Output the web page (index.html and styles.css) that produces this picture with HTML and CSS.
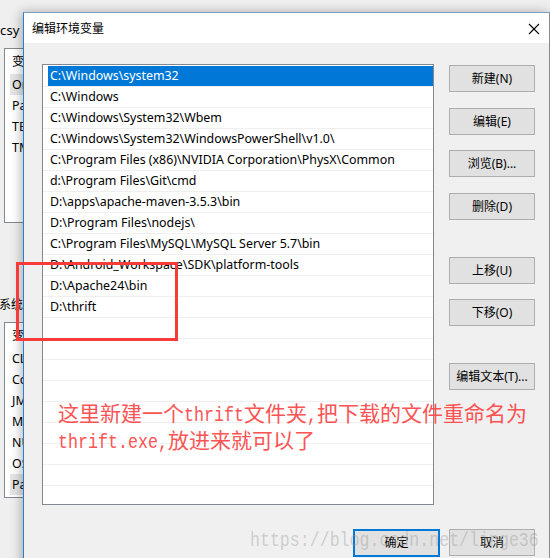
FILE: index.html
```html
<!DOCTYPE html>
<html lang="zh-CN">
<head>
<meta charset="utf-8">
<title>编辑环境变量</title>
<link rel="stylesheet" href="styles.css">
</head>
<body>
<div class="desk">
  <div class="bgwin">
    <div class="bg-head"><span class="bg-user">csy</span><span class="bg-mark"></span></div>
    <div class="bg-list bg-list1">
      <div class="bg-row bg-hdr">变量</div>
      <div class="bg-row bg-sel">OneDrive</div>
      <div class="bg-row">Path</div>
      <div class="bg-row">TEMP</div>
      <div class="bg-row">TMP</div>
    </div>
    <div class="bg-label">系统变量(S)</div>
    <div class="bg-list bg-list2">
      <div class="bg-row bg-hdr">变量</div>
      <div class="bg-row">CLASSPATH</div>
      <div class="bg-row">ComSpec</div>
      <div class="bg-row">JMETER_HOME</div>
      <div class="bg-row">MAVEN_HOME</div>
      <div class="bg-row">NUMBER_OF_PROCESSORS</div>
      <div class="bg-row">OS</div>
      <div class="bg-row bg-sel">Path</div>
    </div>
  </div>

  <div class="dialog">
    <div class="titlebar">
      <span class="title">编辑环境变量</span>
      <svg class="close" width="12" height="12" viewBox="0 0 12 12"><path d="M1 1 L11 11 M11 1 L1 11" stroke="#000" stroke-width="1.1" fill="none"/></svg>
    </div>
    <div class="body">
      <div class="main">
        <div class="list">
          <div class="row sel"><span class="cell">C:\Windows\system32</span></div>
          <div class="row"><span class="cell">C:\Windows</span></div>
          <div class="row"><span class="cell">C:\Windows\System32\Wbem</span></div>
          <div class="row"><span class="cell">C:\Windows\System32\WindowsPowerShell\v1.0\</span></div>
          <div class="row"><span class="cell">C:\Program Files (x86)\NVIDIA Corporation\PhysX\Common</span></div>
          <div class="row"><span class="cell">d:\Program Files\Git\cmd</span></div>
          <div class="row"><span class="cell">D:\apps\apache-maven-3.5.3\bin</span></div>
          <div class="row"><span class="cell">D:\Program Files\nodejs\</span></div>
          <div class="row"><span class="cell">C:\Program Files\MySQL\MySQL Server 5.7\bin</span></div>
          <div class="row"><span class="cell">D:\Android_Workspace\SDK\platform-tools</span></div>
          <div class="row"><span class="cell">D:\Apache24\bin</span></div>
          <div class="row"><span class="cell">D:\thrift</span></div>
          <div class="row"><span class="cell"></span></div>
          <div class="row"><span class="cell"></span></div>
          <div class="row"><span class="cell"></span></div>
          <div class="row"><span class="cell"></span></div>
          <div class="row"><span class="cell"></span></div>
          <div class="row"><span class="cell"></span></div>
          <div class="row"><span class="cell"></span></div>
          <div class="row"><span class="cell"></span></div>
          <div class="row last"><span class="cell"></span></div>
        </div>
        <div class="side">
          <button class="btn">新建(N)</button>
          <button class="btn g16">编辑(E)</button>
          <button class="btn g15">浏览(B)...</button>
          <button class="btn g16">删除(D)</button>
          <button class="btn g37">上移(U)</button>
          <button class="btn g15">下移(O)</button>
          <button class="btn g37">编辑文本(T)...</button>
        </div>
      </div>
      <div class="footer">
        <button class="btn ok">确定</button>
        <button class="btn cancel">取消</button>
      </div>
    </div>
  </div>

  <div class="redbox"></div>
  <div class="note">
    <div class="nline">这里新建一个<span class="m">thrift</span>文件夹<span class="m">,</span>把下载的文件重命名为</div>
    <div class="nline"><span class="m">thrift.exe,</span>放进来就可以了</div>
  </div>
  <div class="watermark">https://blog.csdn.net/linge36</div>
</div>
</body>
</html>
```

FILE: styles.css
```css
html, body {
  margin: 0;
  padding: 0;
}
body {
  background: #f0f0f0;
  font-family: "Noto Sans", "Noto Sans CJK SC", sans-serif;
  font-size: 12px;
  color: #000;
  overflow: hidden;
}
.desk {
  position: relative;
  width: 550px;
  height: 558px;
  overflow: hidden;
  background: #efefef;
}

/* background window (partially hidden) */
.bgwin {
  position: absolute;
  left: 0;
  top: 0;
  width: 200px;
  height: 558px;
}
.bg-head {
  height: 48px;
  display: flex;
  align-items: flex-start;
  padding-top: 21px;
  box-sizing: border-box;
}
.bg-user {
  font-size: 13px;
  line-height: 18px;
  letter-spacing: 0.2px;
}
.bg-mark {
  width: 2px;
  height: 8px;
  background: #e69a3a;
  margin: 6px 0 0 3px;
}
.bg-list {
  margin-left: 4px;
  border: 1px solid #828790;
  background: #fff;
  box-sizing: border-box;
  padding: 2px 0 0 5px;
}
.bg-list1 { height: 175px; }
.bg-list2 { height: 176px; }
.bg-row {
  height: 21px;
  line-height: 21px;
  padding-left: 2px;
  font-size: 12.4px;
}
.bg-hdr {
  height: 23px;
  line-height: 21px;
}
.bg-sel { background: #e5e5e5; }
.bg-label {
  margin-top: 71px;
  height: 28px;
  line-height: 22px;
  margin-left: -1px;
  font-size: 12px;
}

/* dialog */
.dialog {
  position: absolute;
  left: 23px;
  top: 12px;
  width: 527px;
  height: 560px;
  box-sizing: border-box;
  border: 1px solid #7c9cc0;
  border-left-color: #2b7fd0;
  border-right-color: #8a8a8a;
  background: #f0f0f0;
  box-shadow: -2px 0 10px rgba(0, 0, 0, 0.28);
}
.titlebar {
  height: 30px;
  background: #fff;
  display: flex;
  align-items: center;
  justify-content: space-between;
  padding: 0 8px 0 8px;
}
.title {
  font-size: 12px;
  line-height: 30px;
  margin-top: 1px;
}
.close {
  display: block;
  margin-right: 1px;
  margin-top: 1px;
}
.body {
  padding: 21px 14px 0 18px;
}
.main {
  display: flex;
  gap: 15px;
}
.list {
  width: 392px;
  height: 441px;
  box-sizing: border-box;
  border: 1px solid #828790;
  background: #fff;
  padding: 1px 0 0 0;
  overflow: hidden;
}
.row {
  height: 20px;
  border-bottom: 1px solid #efefef;
  padding-left: 5px;
  display: flex;
}
.row.last { border-bottom: none; }
.cell {
  flex: 1;
  padding-left: 2px;
  line-height: 20px;
  font-size: 12.4px;
  white-space: nowrap;
}
.row.sel .cell {
  background: #0078d7;
  color: #fff;
}
.side {
  display: flex;
  flex-direction: column;
  padding-top: 1px;
}
.btn {
  width: 86px;
  height: 27px;
  box-sizing: border-box;
  border: 1px solid #adadad;
  background: #e1e1e1;
  font-family: "Noto Sans", "Noto Sans CJK SC", sans-serif;
  font-size: 12px;
  color: #000;
  padding: 0;
  margin: 0;
  line-height: 25px;
  text-align: center;
}
.g15 { margin-top: 15px; }
.g16 { margin-top: 16px; }
.g37 { margin-top: 37px; }
.footer {
  display: flex;
  justify-content: flex-end;
  gap: 9px;
  margin-top: 24px;
}
.ok {
  width: 87px;
  height: 28px;
  border: 2px solid #0078d7;
  line-height: 24px;
}
.cancel {
  width: 86px;
}

/* annotations */
.redbox {
  position: absolute;
  left: 16px;
  top: 262px;
  width: 162px;
  height: 79px;
  box-sizing: border-box;
  border: 3px solid #f73b3b;
}
.note {
  position: absolute;
  left: 58px;
  top: 399px;
  color: #fa4646;
  font-family: "Noto Sans CJK SC", sans-serif;
  font-size: 21px;
  line-height: 27px;
  white-space: nowrap;
  opacity: 0.92;
}
.nline {
  height: 27px;
}
.m {
  display: inline-block;
  font-family: "Liberation Mono", monospace;
  font-size: 16.67px;
  transform: scaleY(1.22);
  transform-origin: 50% 60%;
}
.watermark {
  position: absolute;
  left: 250px;
  top: 530px;
  font-family: "Liberation Mono", monospace;
  font-size: 16.6px;
  line-height: 22px;
  color: rgba(150, 150, 150, 0.4);
  white-space: nowrap;
  transform: scaleY(1.2);
  transform-origin: 0 50%;
}
```
